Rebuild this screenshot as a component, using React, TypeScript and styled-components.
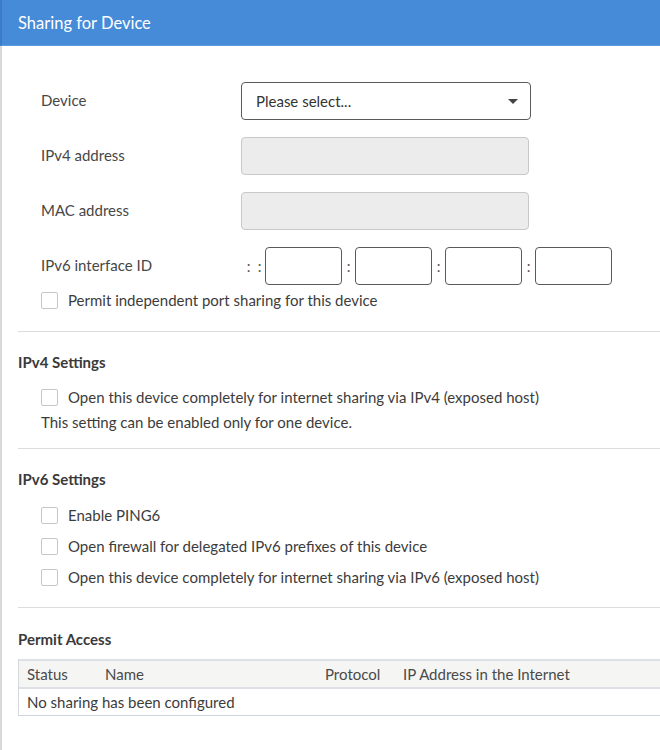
import React from 'react';
import styled, { createGlobalStyle } from 'styled-components';

const GlobalStyle = createGlobalStyle`
    html, body {
        margin: 0;
        padding: 0;
        background: #fff;
    }
    body {
        font-family: Lato, "Liberation Sans", sans-serif;
        font-size: 15px;
        color: #3c3c3c;
    }
`;

const Page = styled.div`
    width: 660px;
    height: 750px;
    overflow: hidden;
    display: flex;
    flex-direction: column;
`;

const Header = styled.div`
    height: 46px;
    flex-shrink: 0;
    background: #468bd8;
    border-left: 2px solid #3b7bc8;
    border-bottom: 1px solid #5d9ae0;
    box-sizing: border-box;
    color: #fff;
    font-size: 16.5px;
    display: flex;
    align-items: center;
    padding-left: 16px;
`;

const Body = styled.div`
    flex: 1;
    border-left: 2px solid #d9d9d5;
    padding-left: 16px;
`;

const Section = styled.div<{ $top?: number; $bottom?: number }>`
    padding-top: ${p => p.$top ?? 20}px;
    padding-bottom: ${p => p.$bottom ?? 0}px;
    border-bottom: ${p => (p.$bottom !== undefined ? '1px solid #dcdcdc' : 'none')};
`;

const Form = styled.div`
    display: grid;
    grid-template-columns: 200px auto;
    row-gap: 17px;
    padding-left: 23px;
    align-items: center;
`;

const Label = styled.div`
    color: #474747;
    line-height: 20px;
    padding-bottom: 2px;
`;

const Select = styled.div`
    width: 290px;
    height: 38px;
    box-sizing: border-box;
    border: 1px solid #5a5a5a;
    border-radius: 4px;
    display: flex;
    align-items: center;
    justify-content: space-between;
    padding: 0 12px 0 14px;
    color: #333;
`;

const Arrow = styled.span`
    width: 0;
    height: 0;
    border-left: 5px solid transparent;
    border-right: 5px solid transparent;
    border-top: 5px solid #444;
`;

const Input = styled.div<{ $disabled?: boolean; $width?: number }>`
    width: ${p => p.$width ?? 288}px;
    height: 38px;
    box-sizing: border-box;
    border: 1px solid ${p => (p.$disabled ? '#c8c8c8' : '#5a5a5a')};
    background: ${p => (p.$disabled ? '#ececec' : '#fff')};
    border-radius: 4px;
`;

const Ipv6Group = styled.div`
    display: flex;
    align-items: center;
    padding-left: 2px;
    color: #555;
`;

const Colon = styled.span<{ $width?: number }>`
    width: ${p => p.$width ?? 13}px;
    text-align: center;
`;

const CheckRow = styled.label<{ $gap?: number }>`
    display: flex;
    align-items: center;
    gap: 10px;
    height: 24px;
    margin-top: ${p => p.$gap ?? 0}px;
    padding-left: 23px;
`;

const Box = styled.span`
    width: 17px;
    height: 17px;
    box-sizing: border-box;
    border: 1px solid #c6c6c6;
    border-radius: 2px;
    background: #fff;
`;

const Heading = styled.div`
    font-weight: 700;
    line-height: 20px;
    color: #3a3a3a;
`;

const Note = styled.div`
    line-height: 24px;
    margin-top: 1px;
    padding-left: 23px;
`;

const Table = styled.div`
    margin-top: 10px;
    border-left: 1px solid #d4d8dd;
`;

const TableRow = styled.div<{ $head?: boolean }>`
    display: grid;
    grid-template-columns: 78px 220px 78px 1fr;
    align-items: center;
    padding-left: 8px;
    box-sizing: border-box;
    height: ${p => (p.$head ? 30 : 27)}px;
    background: ${p => (p.$head ? '#f5f5f3' : '#fff')};
    border-top: ${p => (p.$head ? '2px solid #dde1e5' : 'none')};
    border-bottom: ${p => (p.$head ? '2px solid #dde1e5' : '1px solid #cfd5dc')};
    color: ${p => (p.$head ? '#4a4a4a' : '#3c3c3c')};
`;

const Cell = styled.div<{ $span?: number }>`
    grid-column: span ${p => p.$span ?? 1};
    white-space: nowrap;
`;

function Check({ children, gap }: { children: React.ReactNode; gap?: number }) {
    return <CheckRow $gap={gap}>
        <Box />
        <span>{children}</span>
    </CheckRow>;
}

export default function App() {
    return <Page>
        <GlobalStyle />
        <Header>Sharing for Device</Header>
        <Body>
            <Section $top={36} $bottom={19}>
                <Form>
                    <Label>Device</Label>
                    <Select>
                        <span>Please select...</span>
                        <Arrow />
                    </Select>
                    <Label>IPv4 address</Label>
                    <Input $disabled />
                    <Label>MAC address</Label>
                    <Input $disabled />
                    <Label>IPv6 interface ID</Label>
                    <Ipv6Group>
                        <Colon $width={11}>:</Colon>
                        <Colon $width={11}>:</Colon>
                        <Input $width={77} />
                        <Colon>:</Colon>
                        <Input $width={77} />
                        <Colon>:</Colon>
                        <Input $width={77} />
                        <Colon>:</Colon>
                        <Input $width={77} />
                    </Ipv6Group>
                </Form>
                <Check gap={3}>Permit independent port sharing for this device</Check>
            </Section>

            <Section $bottom={14}>
                <Heading>IPv4 Settings</Heading>
                <Check gap={13}>Open this device completely for internet sharing via IPv4 (exposed host)</Check>
                <Note>This setting can be enabled only for one device.</Note>
            </Section>

            <Section $bottom={18}>
                <Heading>IPv6 Settings</Heading>
                <Check gap={14}>Enable PING6</Check>
                <Check gap={7}>Open firewall for delegated IPv6 prefixes of this device</Check>
                <Check gap={7}>Open this device completely for internet sharing via IPv6 (exposed host)</Check>
            </Section>

            <Section $top={21}>
                <Heading>Permit Access</Heading>
                <Table>
                    <TableRow $head>
                        <Cell>Status</Cell>
                        <Cell>Name</Cell>
                        <Cell>Protocol</Cell>
                        <Cell>IP Address in the Internet</Cell>
                    </TableRow>
                    <TableRow>
                        <Cell $span={4}>No sharing has been configured</Cell>
                    </TableRow>
                </Table>
            </Section>
        </Body>
    </Page>;
}
